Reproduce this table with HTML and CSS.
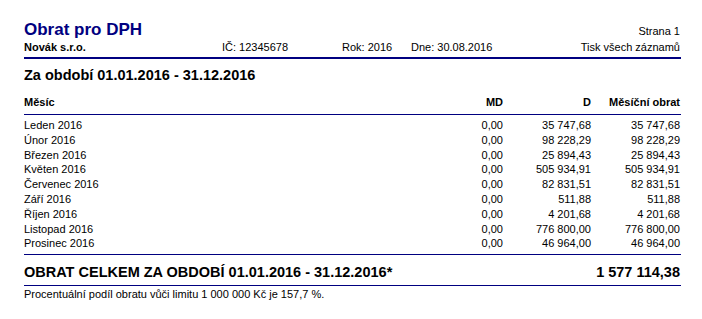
FILE: index.html
```html
<!DOCTYPE html>
<html lang="cs">
<head>
<meta charset="utf-8">
<title>Obrat pro DPH</title>
<link rel="stylesheet" href="styles.css">
</head>
<body>
<div class="page">
  <header class="head">
    <div class="title-row">
      <h1 class="title">Obrat pro DPH</h1>
      <span class="small">Strana 1</span>
    </div>
    <div class="info-row">
      <span class="company">Novák s.r.o.</span>
      <span>IČ: 12345678</span>
      <span>Rok: 2016</span>
      <span>Dne: 30.08.2016</span>
      <span class="right">Tisk všech záznamů</span>
    </div>
  </header>

  <h2 class="period">Za období 01.01.2016 - 31.12.2016</h2>

  <div class="table">
    <div class="thead">
      <span>Měsíc</span>
      <span class="num">MD</span>
      <span class="num">D</span>
      <span class="num">Měsíční obrat</span>
    </div>
    <div class="tbody">
      <div class="row"><span>Leden 2016</span><span class="num">0,00</span><span class="num">35 747,68</span><span class="num">35 747,68</span></div>
      <div class="row"><span>Únor 2016</span><span class="num">0,00</span><span class="num">98 228,29</span><span class="num">98 228,29</span></div>
      <div class="row"><span>Březen 2016</span><span class="num">0,00</span><span class="num">25 894,43</span><span class="num">25 894,43</span></div>
      <div class="row"><span>Květen 2016</span><span class="num">0,00</span><span class="num">505 934,91</span><span class="num">505 934,91</span></div>
      <div class="row"><span>Červenec 2016</span><span class="num">0,00</span><span class="num">82 831,51</span><span class="num">82 831,51</span></div>
      <div class="row"><span>Září 2016</span><span class="num">0,00</span><span class="num">511,88</span><span class="num">511,88</span></div>
      <div class="row"><span>Říjen 2016</span><span class="num">0,00</span><span class="num">4 201,68</span><span class="num">4 201,68</span></div>
      <div class="row"><span>Listopad 2016</span><span class="num">0,00</span><span class="num">776 800,00</span><span class="num">776 800,00</span></div>
      <div class="row"><span>Prosinec 2016</span><span class="num">0,00</span><span class="num">46 964,00</span><span class="num">46 964,00</span></div>
    </div>
    <div class="total">
      <span>OBRAT CELKEM ZA OBDOBÍ 01.01.2016 - 31.12.2016*</span>
      <span class="num">1 577 114,38</span>
    </div>
  </div>

  <p class="note">Procentuální podíl obratu vůči limitu 1 000 000 Kč je 157,7 %.</p>
</div>
</body>
</html>
```

FILE: styles.css
```css
* {
  box-sizing: border-box;
}

html, body {
  margin: 0;
  padding: 0;
  background: #ffffff;
}

body {
  font-family: "Liberation Sans", Arial, sans-serif;
  font-size: 11px;
  color: #000000;
}

.page {
  width: 657px;
  margin-left: 24px;
  padding-top: 20px;
}

.head {
  border-bottom: 2px solid #000080;
  padding-bottom: 3px;
}

.title-row {
  display: flex;
  justify-content: space-between;
  align-items: baseline;
  padding-right: 1px;
}

.title {
  margin: 0;
  font-size: 17px;
  line-height: 20px;
  font-weight: bold;
  color: #000080;
}

.small {
  line-height: 14px;
}

.info-row {
  display: grid;
  grid-template-columns: 198px 120px 69px 1fr auto;
  line-height: 14px;
  padding-right: 1px;
}

.company {
  font-weight: bold;
}

.right {
  text-align: right;
}

.period {
  margin: 7px 0 0 0;
  font-size: 14.5px;
  line-height: 18px;
  font-weight: bold;
}

.table {
  margin-top: 11px;
}

.thead,
.row {
  display: grid;
  grid-template-columns: 1fr 80px 88px 89px;
  padding-right: 1px;
}

.thead {
  font-weight: bold;
  line-height: 14px;
  padding-bottom: 5px;
  border-bottom: 1px solid #000080;
}

.tbody {
  padding-top: 3px;
  padding-bottom: 3px;
}

.row {
  line-height: 14.8px;
}

.num {
  text-align: right;
}

.total {
  display: flex;
  justify-content: space-between;
  font-size: 14.5px;
  line-height: 18px;
  font-weight: bold;
  border-top: 1px solid #000080;
  border-bottom: 1px solid #000080;
  padding: 8px 1px 4px 0;
}

.note {
  margin: 1px 0 0 0;
  line-height: 14px;
}
```
